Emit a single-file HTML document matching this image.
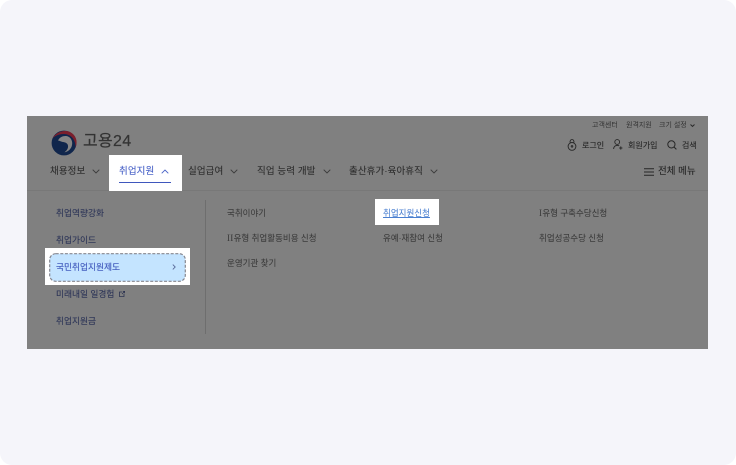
<!DOCTYPE html>
<html lang="ko">
<head>
<meta charset="utf-8">
<style>
html,body{margin:0;padding:0;background:#fff}
body{width:736px;height:465px;overflow:hidden;position:relative;font-family:"Liberation Sans","Noto Sans CJK KR",sans-serif}
#bg{position:absolute;left:0;top:0;width:736px;height:465px;background:#f5f5fa;border-radius:12px}
#panel{position:absolute;left:27px;top:116px;width:681px;height:233px;background:#808080}
#wrap{position:absolute;left:0;top:0;width:736px;height:465px;filter:blur(.35px)}
.t{position:absolute;white-space:nowrap;line-height:14px;height:14px}
.w{position:absolute;background:#fff}
.top{font-size:7px;color:#333}
.util{font-size:8px;color:#262626;-webkit-text-stroke:.1px #262626}
.nav{font-size:9.5px;color:#2e2e2e;-webkit-text-stroke:.1px #2e2e2e;letter-spacing:.1px}
.side{font-size:8.7px;color:#2e3658;-webkit-text-stroke:.12px #2e3658}
.sub{font-size:8.5px;color:#3a3a3a;-webkit-text-stroke:.05px #3a3a3a}
.r{font-family:"Liberation Serif",serif;font-size:9px;letter-spacing:.3px}
svg{position:absolute;overflow:visible}
</style>
</head>
<body>
<div id="bg"></div>
<div id="panel"></div>
<div id="wrap">
<div style="position:absolute;left:27px;top:190px;width:681px;height:1px;background:#787878"></div>
<svg style="left:51px;top:130px" width="26" height="26" viewBox="0 0 26 26">
<circle cx="13" cy="13" r="12.4" fill="#10264c"/>
<path d="M7 10.5C9 6.5 14 5 17.5 6.8C21 8.6 22 13 20.6 16.6C19.2 20 16 22 13.5 22.2C16.6 20.2 17.8 17 16.6 14.4C15 11.8 12.5 12.4 10.5 11.6C9 11 8 10.6 7 10.5Z" fill="#858585"/>
<path d="M1.5 8.5C5 2 13 -.5 19 2C25 5 27 11 24.6 17.5C24.6 11 21.5 6.5 17 4.8C11 2.8 5 5 1.5 8.5Z" fill="#7a1f2c"/>
</svg>
<div class="t" style="left:83px;top:133px;font-size:16px;line-height:18px;height:18px;color:#333;-webkit-text-stroke:.2px #333;letter-spacing:.3px">고용24</div>

<div class="t top" style="left:592px;top:119px">고객센터</div>
<div class="t top" style="left:626px;top:119px">원격지원</div>
<div class="t top" style="left:659px;top:119px">크기 설정</div>
<svg style="left:690px;top:124px" width="5" height="3" viewBox="0 0 5 3"><path d="M.5.5L2.5 2.4L4.5.5" fill="none" stroke="#2a2a2a" stroke-width="1"/></svg>

<svg style="left:567px;top:139px" width="10" height="12" viewBox="0 0 10 12" fill="none" stroke="#262626" stroke-width=".9"><circle cx="5" cy="7.4" r="3.9"/><path d="M3.2 3.8C2.6 1.5 3.8.6 5 .6S7.4 1.5 6.8 3.8"/><circle cx="5" cy="7.4" r=".8"/></svg>
<div class="t util" style="left:582px;top:139px">로그인</div>
<svg style="left:613px;top:139px" width="10" height="11" viewBox="0 0 10 11" fill="none" stroke="#262626" stroke-width=".9"><circle cx="4.2" cy="3" r="2.4"/><path d="M.6 10C.8 7.5 2.2 6.4 4.2 6.4C5 6.4 5.6 6.5 6.2 6.9M7.8 7.4V10.6M6.2 9H9.4"/></svg>
<div class="t util" style="left:628px;top:139px">회원가입</div>
<svg style="left:667px;top:140px" width="10" height="10" viewBox="0 0 10 10" fill="none" stroke="#262626" stroke-width="1"><circle cx="4.4" cy="4.4" r="3.6"/><path d="M7 7L9.4 9.4"/></svg>
<div class="t util" style="left:682px;top:139px">검색</div>

<div class="t nav" style="left:50px;top:165px">채용정보</div>
<svg style="left:92px;top:169px" width="8" height="5" viewBox="0 0 8 5"><path d="M.7.7L4 4L7.3.7" fill="none" stroke="#3a3a3a" stroke-width=".9"/></svg>

<div class="w" style="left:109px;top:155px;width:73px;height:36px"></div>
<div class="t nav" style="left:119px;top:165px;color:#4a63c8;-webkit-text-stroke:.1px #4a63c8">취업지원</div>
<svg style="left:161px;top:169px" width="8" height="5" viewBox="0 0 8 5"><path d="M.7 4.3L4 1L7.3 4.3" fill="none" stroke="#4a63c8" stroke-width=".9"/></svg>
<div style="position:absolute;left:119px;top:181.5px;width:52px;height:1.5px;background:#3f57bd"></div>

<div class="t nav" style="left:188px;top:165px">실업급여</div>
<svg style="left:230px;top:169px" width="8" height="5" viewBox="0 0 8 5"><path d="M.7.7L4 4L7.3.7" fill="none" stroke="#3a3a3a" stroke-width=".9"/></svg>
<div class="t nav" style="left:257px;top:165px">직업 능력 개발</div>
<svg style="left:323px;top:169px" width="8" height="5" viewBox="0 0 8 5"><path d="M.7.7L4 4L7.3.7" fill="none" stroke="#3a3a3a" stroke-width=".9"/></svg>
<div class="t nav" style="left:349px;top:165px">출산휴가·육아휴직</div>
<svg style="left:430px;top:169px" width="8" height="5" viewBox="0 0 8 5"><path d="M.7.7L4 4L7.3.7" fill="none" stroke="#3a3a3a" stroke-width=".9"/></svg>

<svg style="left:644px;top:168px" width="10" height="8" viewBox="0 0 10 8"><path d="M0 .7H10M0 4H10M0 7.3H10" stroke="#262626" stroke-width="1"/></svg>
<div class="t" style="left:658px;top:165px;font-size:9.5px;color:#262626;-webkit-text-stroke:.1px #262626">전체 메뉴</div>

<div style="position:absolute;left:205px;top:200px;width:1px;height:134px;background:#6e6e6e"></div>

<div class="t side" style="left:56px;top:206px">취업역량강화</div>
<div class="t side" style="left:56px;top:233px">취업가이드</div>

<div class="w" style="left:45px;top:248px;width:145px;height:37px"></div>
<svg style="left:49px;top:253px" width="137" height="29" viewBox="0 0 137 29"><rect x=".7" y=".7" width="135.6" height="27.6" rx="6" fill="#c4e4ff" stroke="#85868f" stroke-width="1.2" stroke-dasharray="3 1.6"/></svg>
<div class="t side" style="left:56px;top:260px;color:#3f58bc;-webkit-text-stroke:.12px #3f58bc">국민취업지원제도</div>
<svg style="left:172px;top:264px" width="4" height="6" viewBox="0 0 4 6"><path d="M.8.6L3.2 3L.8 5.4" fill="none" stroke="#5a6a9a" stroke-width=".9"/></svg>

<div class="t side" style="left:56px;top:287px">미래내일 일경험</div>
<svg style="left:119px;top:291px" width="6" height="6" viewBox="0 0 6 6" fill="none" stroke="#2c3350" stroke-width=".8"><path d="M3 1H.5V5.5H5V3M3 3L5.6.4M3.8.4H5.6V2.2"/></svg>
<div class="t side" style="left:56px;top:314px">취업지원금</div>

<div class="t sub" style="left:227px;top:206px">국취이야기</div>
<div class="t sub" style="left:227px;top:231px"><span class="r">II</span>유형 취업활동비용 신청</div>
<div class="t sub" style="left:227px;top:256px">운영기관 찾기</div>

<div class="w" style="left:375px;top:199px;width:64px;height:26px"></div>
<div class="t sub" style="left:383px;top:206px;color:#4a7fd0;-webkit-text-stroke:.05px #4a7fd0;text-decoration:underline">취업지원신청</div>
<div class="t sub" style="left:383px;top:231px">유예·재참여 신청</div>

<div class="t sub" style="left:539px;top:206px"><span class="r">I</span>유형 구축수당신청</div>
<div class="t sub" style="left:539px;top:231px">취업성공수당 신청</div>
</div>
</body>
</html>
